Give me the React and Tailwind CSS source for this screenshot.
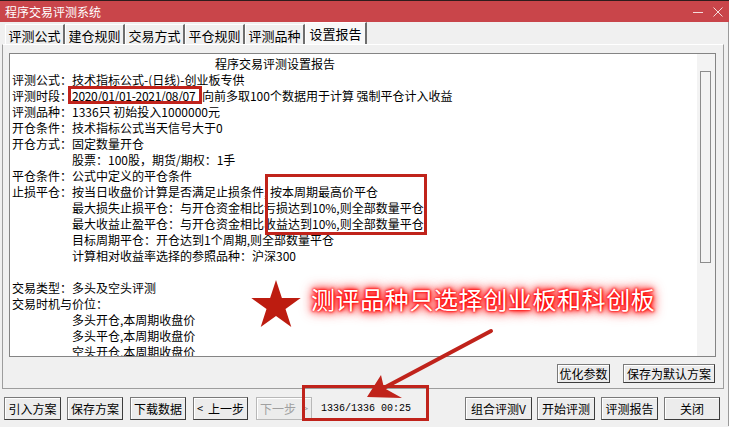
import React from "react";

const tabs = ["评测公式", "建仓规则", "交易方式", "平仓规则", "评测品种", "设置报告"];

const lines = [
  { label: "评测公式：", text: "技术指标公式-(日线)-创业板专供" },
  { label: "评测时段：", date: "2020/01/01-2021/08/07", text: " 向前多取100个数据用于计算 强制平仓计入收益" },
  { label: "评测品种：", text: "1336只 初始投入1000000元" },
  { label: "开仓条件：", text: "技术指标公式当天信号大于0" },
  { label: "开仓方式：", text: "固定数量开仓" },
  { label: "", text: "股票：100股，期货/期权：1手" },
  { label: "平仓条件：", text: "公式中定义的平仓条件" },
  { label: "止损平仓：", text: "按当日收盘价计算是否满足止损条件, 按本周期最高价平仓" },
  { label: "", text: "最大损失止损平仓：与开仓资金相比亏损达到10%,则全部数量平仓" },
  { label: "", text: "最大收益止盈平仓：与开仓资金相比收益达到10%,则全部数量平仓" },
  { label: "", text: "目标周期平仓：开仓达到1个周期,则全部数量平仓" },
  { label: "", text: "计算相对收益率选择的参照品种：沪深300" },
  { label: "", text: "" },
  { label: "交易类型：", text: "多头及空头评测" },
  { label: "交易时机与价位：", text: "" },
  { label: "", text: "多头开仓,本周期收盘价" },
  { label: "", text: "多头平仓,本周期收盘价" },
  { label: "", text: "空头开仓,本周期收盘价" },
];

const Btn = ({ children, className = "", disabled = false }) => (
  <div
    className={`flex items-center justify-center border bg-[#ececec] shadow-[inset_1px_1px_0_#ffffff] text-[12px] leading-none whitespace-nowrap ${
      disabled
        ? "border-[#b8b8b8] text-[#a0a0a0]"
        : "border-[#7a7a7a] border-r-[#3c3c3c] border-b-[#3c3c3c] text-black"
    } ${className}`}
  >
    {children}
  </div>
);

export default function App() {
  return (
    <div className="relative w-[729px] h-[427px] overflow-hidden bg-[#f0f0f0] font-['Noto_Sans_CJK_SC','Noto_Sans',sans-serif] text-black">
      {/* title bar */}
      <div className="h-[22px] bg-[#c9454a] border-t border-[#2e1c1c] flex items-center pl-[5px] pr-[6px]">
        <span className="text-white text-[12px] leading-none">程序交易评测系统</span>
        <div className="ml-auto flex items-center gap-[10px]">
          <svg width="10" height="10" viewBox="0 0 10 10">
            <line x1="0" y1="5.5" x2="10" y2="5.5" stroke="#f4dcdc" strokeWidth="1" />
          </svg>
          <svg width="10" height="10" viewBox="0 0 10 10">
            <path d="M0.5 0.5 L9.5 9.5 M9.5 0.5 L0.5 9.5" stroke="#f4dcdc" strokeWidth="1" />
          </svg>
        </div>
      </div>

      <div className="border-r border-[#9a9a9a] h-[404px]">
        {/* tabs */}
        <div className="h-[22px] flex items-end pl-[5px]">
          {tabs.map((t, i) =>
            i === tabs.length - 1 ? (
              <div
                key={t}
                className="w-[62px] h-[22px] flex items-center justify-center bg-[#f8f8f8] border-l border-t border-white border-r-2 border-r-[#6e6e6e] text-[13px] leading-none"
              >
                {t}
              </div>
            ) : (
              <div
                key={t}
                className="w-[60px] h-[20px] flex items-center justify-center bg-[#f0f0f0] border-l border-t border-white border-r-2 border-r-[#6e6e6e] text-[13px] leading-none pt-[2px]"
              >
                {t}
              </div>
            )
          )}
        </div>

        {/* tab page */}
        <div className="ml-[2px] w-[722px] h-[345px] border border-[#9d9d9d] border-t-white flex flex-col">
          <div className="ml-[6px] mt-[8px] w-[707px] h-[304px] border border-[#848484] flex">
            <div className="flex-1 bg-white overflow-hidden pl-[2px] pt-[2px] text-[12px] leading-[16px]">
              <div className="h-[16px] pl-[203px] whitespace-nowrap">程序交易评测设置报告</div>
              {lines.map((l, i) => (
                <div key={i} className="h-[16px] whitespace-nowrap">
                  {l.label ? <span>{l.label}</span> : <span className="inline-block w-[60px]" />}
                  {l.date && <span className="tracking-[-0.3px] mr-[4px]">{l.date}</span>}
                  <span>{l.text}</span>
                </div>
              ))}
            </div>
            <div className="w-[18px] bg-[#f3f3f3] pt-[17px] pl-[3px]">
              <div className="w-[11px] h-[192px] border border-[#8c8c8c] bg-[#f3f3f3]" />
            </div>
          </div>
          <div className="mt-[7px] flex justify-end gap-[13px] pr-[8px]">
            <Btn className="w-[53px] h-[19px]">优化参数</Btn>
            <Btn className="w-[92px] h-[19px]">保存为默认方案</Btn>
          </div>
        </div>

        {/* bottom buttons */}
        <div className="mt-[8px] h-[23px] flex items-center pl-[4px] pr-[8px]">
          <Btn className="w-[57px] h-[23px]">引入方案</Btn>
          <Btn className="w-[56px] h-[23px] ml-[6px]">保存方案</Btn>
          <Btn className="w-[56px] h-[23px] ml-[7px]">下载数据</Btn>
          <Btn className="w-[55px] h-[23px] ml-[7px]">
            <span className="mr-[5px] text-[11px]">&lt;</span>上一步
          </Btn>
          <Btn className="w-[56px] h-[23px] ml-[8px]" disabled>
            下一步<span className="ml-[6px] text-[11px]">&gt;</span>
          </Btn>
          <span className="ml-[9px] font-['Liberation_Mono',monospace] text-[10px] leading-none pt-[1px]">
            1336/1336 00:25
          </span>
          <Btn className="w-[67px] h-[23px] ml-auto">组合评测V</Btn>
          <Btn className="w-[58px] h-[23px] ml-[5px]">开始评测</Btn>
          <Btn className="w-[57px] h-[23px] ml-[6px]">评测报告</Btn>
          <Btn className="w-[56px] h-[23px] ml-[6px]">关闭</Btn>
        </div>
      </div>

      {/* annotations */}
      <svg className="absolute left-0 top-0 pointer-events-none" width="729" height="427" viewBox="0 0 729 427">
        <g fill="none" stroke="#c0231b" strokeWidth="3">
          <rect x="69.5" y="87.5" width="131" height="15" />
          <rect x="266.5" y="175.5" width="159" height="58" />
          <rect x="303.5" y="386.5" width="124" height="33" />
        </g>
        <polygon
          transform="translate(249 279)"
          fill="#bd1c10"
          points="27,1 32.9,18.9 51.7,19 36.5,30.1 42.3,48 27,37 11.7,48 17.5,30.1 2.3,19 21.1,18.9"
        />
        <line x1="491" y1="331" x2="380" y2="390" stroke="#c0231b" strokeWidth="4" strokeLinecap="round" />
        <polygon points="367,397 381,375 384,388 402,398" fill="#c0231b" />
      </svg>
      <div className="absolute left-[311px] top-[284px] text-white text-[24px] leading-[30px] tracking-[0.6px] whitespace-nowrap [text-shadow:0_0_2px_#ff0000,0_0_3px_#ff0000,0_0_5px_#ff0000,0_0_8px_#ff0000,0_0_12px_#ff2020,0_0_14px_#ff4040]">
        测评品种只选择创业板和科创板
      </div>
    </div>
  );
}
